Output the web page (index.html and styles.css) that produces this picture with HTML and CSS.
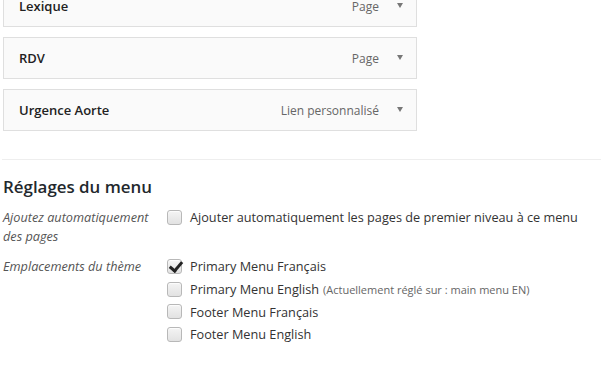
FILE: index.html
```html
<!DOCTYPE html>
<html lang="fr">

<head>
    <meta charset="UTF-8" />
    <title>Menus</title>
    <link rel="stylesheet" href="styles.css">
</head>

<body>
    <div class="menu-edit">
        <ul class="menu-items">
            <li class="menu-item">
                <span class="item-title">Lexique</span>
                <span class="item-type">Page</span>
                <span class="item-arrow"></span>
            </li>
            <li class="menu-item">
                <span class="item-title">RDV</span>
                <span class="item-type">Page</span>
                <span class="item-arrow"></span>
            </li>
            <li class="menu-item">
                <span class="item-title">Urgence Aorte</span>
                <span class="item-type">Lien personnalisé</span>
                <span class="item-arrow"></span>
            </li>
        </ul>

        <div class="menu-settings">
            <h3>Réglages du menu</h3>

            <div class="setting-row">
                <div class="setting-label">Ajoutez automatiquement des pages</div>
                <div class="setting-input">
                    <label class="check"><span class="box"></span>Ajouter automatiquement les pages de premier niveau à ce menu</label>
                </div>
            </div>

            <div class="setting-row">
                <div class="setting-label">Emplacements du thème</div>
                <div class="setting-input">
                    <label class="check"><span class="box checked"></span>Primary Menu Français</label>
                    <label class="check"><span class="box"></span>Primary Menu English <span class="theme-note">(Actuellement réglé sur : main menu EN)</span></label>
                    <label class="check"><span class="box"></span>Footer Menu Français</label>
                    <label class="check"><span class="box"></span>Footer Menu English</label>
                </div>
            </div>
        </div>
    </div>
</body>

</html>
```

FILE: styles.css
```css
body,
html {
    margin: 0;
    padding: 0;
    background-color: #fff;
    font-family: "Open Sans", sans-serif;
    font-size: 12.7px;
    color: #444;
    overflow: hidden;
}

.menu-edit {
    padding-left: 3px;
    margin-top: -15px;
}

.menu-items {
    list-style: none;
    margin: 0;
    padding: 0;
    width: 414px;
}

.menu-item {
    display: flex;
    align-items: center;
    height: 40px;
    border: 1px solid #dfdfdf;
    background-color: #fafafa;
    margin-bottom: 10px;
    padding: 0 12px 0 15px;
}

.item-title {
    flex: 1;
    font-size: 13px;
    font-weight: 600;
    color: #222;
}

.item-type {
    color: #666;
    font-size: 12px;
    margin-right: 18px;
}

.item-arrow {
    width: 0;
    height: 0;
    border-left: 3px solid transparent;
    border-right: 3px solid transparent;
    border-top: 5px solid #777;
    margin-bottom: 2px;
    margin-right: 1px;
}

.menu-settings {
    margin-top: 28px;
    border-top: 1px solid #eee;
    margin-left: -1px;
}

h3 {
    font-size: 16.9px;
    font-weight: 600;
    color: #23282d;
    margin: 15px 0 8px 1px;
}

.setting-row {
    display: flex;
    margin-left: 1px;
    margin-bottom: 9px;
}

.setting-label {
    width: 150px;
    margin-right: 13px;
    font-style: italic;
    color: #555;
    line-height: 19px;
    padding-top: 2px;
}

.setting-input {
    display: flex;
    flex-direction: column;
}

.check {
    display: flex;
    align-items: center;
    height: 22.7px;
    color: #333;
}

.box {
    width: 13px;
    height: 13px;
    border: 1px solid #b8b8b8;
    border-radius: 3px;
    background: linear-gradient(#f4f4f4, #e2e2e2);
    box-shadow: inset 0 1px 1px rgba(255, 255, 255, 0.8);
    margin-left: 1px;
    margin-right: 8px;
    position: relative;
    flex-shrink: 0;
}

.box.checked::after {
    content: "";
    position: absolute;
    left: 4px;
    top: -1px;
    width: 5px;
    height: 10px;
    border-right: 3px solid #222;
    border-bottom: 3px solid #222;
    transform: rotate(40deg);
}

.theme-note {
    font-size: 11px;
    color: #666;
    margin-left: 4px;
}
```
